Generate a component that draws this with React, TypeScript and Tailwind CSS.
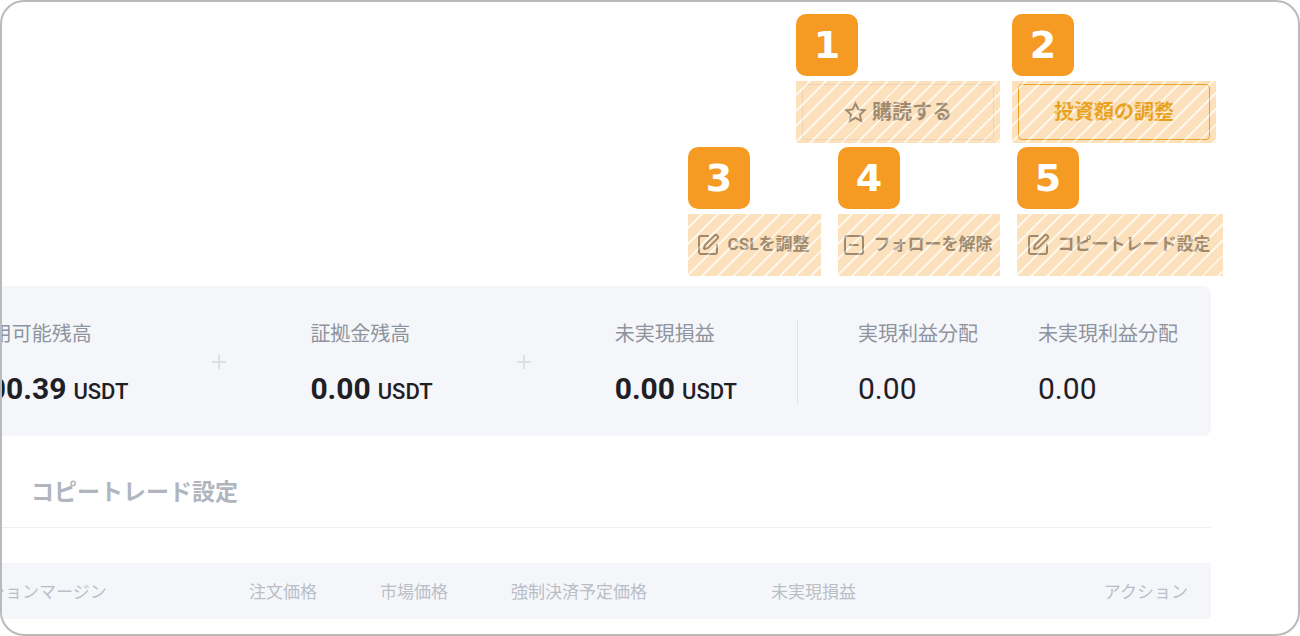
import React from "react";
import { SquareMinus, SquarePen } from "lucide-react";

const StarIcon: React.FC = () => (
  <svg width="23" height="23" viewBox="0 0 24 24" fill="none" stroke="currentColor" strokeWidth="2">
    <polygon points="12 2.6 14.9 8.7 21.6 9.6 16.7 14.2 17.9 20.8 12 17.6 6.1 20.8 7.3 14.2 2.4 9.6 9.1 8.7" />
  </svg>
);

const PlusMark: React.FC = () => (
  <svg className="shrink-0" width="14" height="14" viewBox="0 0 14 14" fill="none" stroke="#dcdfe3" strokeWidth="2">
    <path d="M7 0v14M0 7h14" />
  </svg>
);

// Numbered badge with the highlighted control below it
const Step: React.FC<{ num: number; width: string; children: React.ReactNode }> = ({ num, width, children }) => (
  <div className={`flex flex-col gap-[5px] ${width}`}>
    <span className="flex size-[62px] items-center justify-center rounded-[10px] bg-[#f59b23] font-['DejaVu_Sans',sans-serif] text-[38px] leading-none font-bold text-white">
      {num}
    </span>
    <div className="relative h-[62px]">
      {children}
      <span className="pointer-events-none absolute inset-0 bg-[repeating-linear-gradient(135deg,rgba(245,155,35,0.3)_0px,rgba(245,155,35,0.3)_9px,rgba(255,236,208,0.45)_9px,rgba(255,236,208,0.45)_11px)]" />
    </div>
  </div>
);

const TextButton: React.FC<{ icon: React.ReactNode; label: string }> = ({ icon, label }) => (
  <button className="flex h-full w-full items-center justify-center gap-2 pr-1 text-[17px] font-bold whitespace-nowrap text-[#7b828e]">
    {icon}
    {label}
  </button>
);

const balances = [
  { label: "利用可能残高", value: "100.39" },
  { label: "証拠金残高", value: "0.00" },
  { label: "未実現損益", value: "0.00" },
];

const shares = [
  { label: "実現利益分配", value: "0.00" },
  { label: "未実現利益分配", value: "0.00" },
];

const columns = [
  { label: "ポジションマージン", className: "w-[295px] text-left" },
  { label: "注文価格", className: "w-[131px] text-left" },
  { label: "市場価格", className: "w-[131px] text-left" },
  { label: "強制決済予定価格", className: "w-[260px] text-left" },
  { label: "未実現損益", className: "text-left" },
  { label: "アクション", className: "pr-[23px] text-right" },
];

const App: React.FC = () => {
  return (
    <div className="min-h-screen overflow-hidden rounded-[24px] border-2 border-[#bababa] bg-white pt-3 pb-[15px] font-[Roboto,'Noto_Sans_CJK_JP',sans-serif]">
      {/* Actions */}
      <div className="flex justify-end gap-3 pr-[82px]">
        <Step num={1} width="w-[204px]">
          <div className="h-full px-1.5 py-[3px]">
            <button className="flex h-full w-full items-center justify-center gap-[5px] rounded border border-[#eaecef] text-xl font-bold text-[#7b828e]">
              <StarIcon />
              購読する
            </button>
          </div>
        </Step>
        <Step num={2} width="w-[204px]">
          <div className="h-full px-1.5 py-[3px]">
            <button className="flex h-full w-full items-center justify-center rounded border border-[#e3a31c] text-xl font-bold text-[#e3a31c]">
              投資額の調整
            </button>
          </div>
        </Step>
      </div>
      <div className="mt-1 flex justify-end gap-[17px] pr-[75px]">
        <Step num={3} width="w-[133px]">
          <TextButton icon={<SquarePen size={24} strokeWidth={2} />} label="CSLを調整" />
        </Step>
        <Step num={4} width="w-[162px]">
          <TextButton icon={<SquareMinus size={24} strokeWidth={2} />} label="フォローを解除" />
        </Step>
        <Step num={5} width="w-[206px]">
          <TextButton icon={<SquarePen size={24} strokeWidth={2} />} label="コピートレード設定" />
        </Step>
      </div>

      <div className="mr-[87px] -ml-12">
        {/* Balances */}
        <div className="mt-2.5 flex items-center justify-end rounded-lg bg-[#f5f6fa] pt-[34px] pb-8 pr-[33px] whitespace-nowrap">
          {balances.map((item, i) => (
            <React.Fragment key={item.label}>
              {i > 0 && (
                <div className="px-[84px]">
                  <PlusMark />
                </div>
              )}
              <div>
                <div className="text-xl leading-7 text-[#8e949e]">{item.label}</div>
                <div className="mt-[25px] flex items-baseline gap-[7px] text-[30px] leading-[31px] font-bold text-[#1e2026]">
                  {item.value}
                  <span className="text-[22px] leading-6 font-medium">USDT</span>
                </div>
              </div>
            </React.Fragment>
          ))}
          <div className="mx-[60px] h-[84px] w-px bg-[#dfe2e6]" />
          <div className="flex gap-[60px]">
            {shares.map((item) => (
              <div key={item.label}>
                <div className="text-xl leading-7 text-[#8e949e]">{item.label}</div>
                <div className="mt-[25px] text-[30px] leading-[31px] text-[#1e2026]">{item.value}</div>
              </div>
            ))}
          </div>
        </div>

        {/* Tabs */}
        <div className="mt-[41px] border-b border-[#eeeff2] pb-[18px] pl-[77px]">
          <button className="block text-[23px] leading-8 font-bold text-[#b0b5be]">コピートレード設定</button>
        </div>

        {/* Positions */}
        <table className="mt-[35px] w-full table-fixed bg-[#f5f6fa]">
          <thead>
            <tr className="h-14 text-[17px] whitespace-nowrap text-[#b9bec7]">
              {columns.map((col) => (
                <th key={col.label} scope="col" className={`pt-[3px] font-normal ${col.className}`}>
                  {col.label}
                </th>
              ))}
            </tr>
          </thead>
        </table>
      </div>
    </div>
  );
};

export default App;
